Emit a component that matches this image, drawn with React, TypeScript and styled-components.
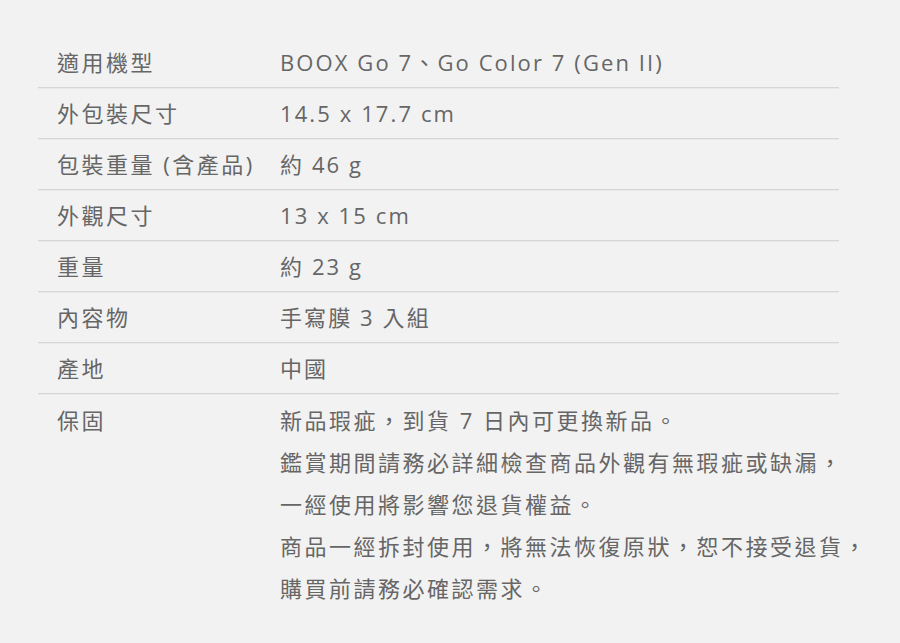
import * as React from 'react'
import styled, { createGlobalStyle } from 'styled-components'

const GlobalStyle = createGlobalStyle`
    html, body {
        margin: 0;
        padding: 0;
        background: #f2f2f2;
    }
    body {
        font-family: "Open Sans", "Noto Sans CJK TC", sans-serif;
        color: #666666;
    }
`

const Page = styled.div`
    min-height: 643px;
    padding: 37px 0 0 38px;
    box-sizing: border-box;
`

const Table = styled.div`
    width: 801px;
    display: flex;
    flex-direction: column;
`

const Row = styled.div<{ $last?: boolean }>`
    display: grid;
    grid-template-columns: 242px 1fr;
    padding: ${p => (p.$last ? '5px 0 0' : '11px 0')};
    border-bottom: ${p => (p.$last ? 'none' : '1px solid #d6d6d6')};
    box-shadow: ${p => (p.$last ? 'none' : '0 1px 0 #e9e9e9')};
    font-size: 22px;
    letter-spacing: 2.5px;
    line-height: ${p => (p.$last ? '42px' : '28px')};
`

const Label = styled.div`
    padding-left: 19px;
    white-space: nowrap;
`

const Value = styled.div<{ $tight?: boolean }>`
    white-space: nowrap;
    letter-spacing: ${p => (p.$tight ? '2.1px' : '2.5px')};
`

const specs: [string, string][] = [
    ['適用機型', 'BOOX Go 7、Go Color 7 (Gen II)'],
    ['外包裝尺寸', '14.5 x 17.7 cm'],
    ['包裝重量 (含產品)', '約 46 g'],
    ['外觀尺寸', '13 x 15 cm'],
    ['重量', '約 23 g'],
    ['內容物', '手寫膜 3 入組'],
    ['產地', '中國'],
]

const warranty = [
    '新品瑕疵，到貨 7 日內可更換新品。',
    '鑑賞期間請務必詳細檢查商品外觀有無瑕疵或缺漏，',
    '一經使用將影響您退貨權益。',
    '商品一經拆封使用，將無法恢復原狀，恕不接受退貨，',
    '購買前請務必確認需求。',
]

const App = () => {
    return (
        <Page>
            <GlobalStyle />
            <Table>
                {specs.map(([k, v]) => (
                    <Row key={k}>
                        <Label>{k}</Label>
                        <Value $tight>{v}</Value>
                    </Row>
                ))}
                <Row $last>
                    <Label>保固</Label>
                    <Value>
                        {warranty.map(line => (
                            <div key={line}>{line}</div>
                        ))}
                    </Value>
                </Row>
            </Table>
        </Page>
    )
}

export default App
